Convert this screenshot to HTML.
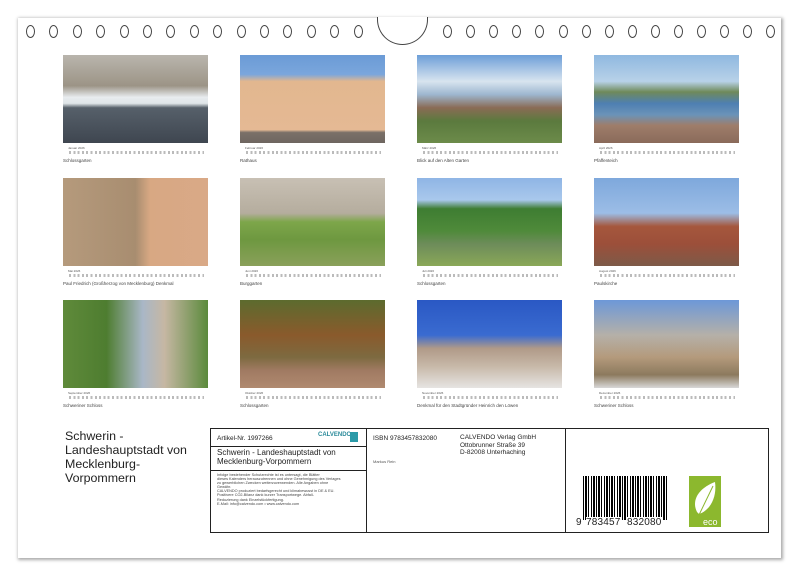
<!DOCTYPE html>
<html><head><meta charset="utf-8"><style>
*{margin:0;padding:0;box-sizing:border-box}
body{width:800px;height:577px;background:#fff;position:relative;overflow:hidden;font-family:"Liberation Sans",sans-serif;color:#222}
.card{position:absolute;left:18px;top:18px;width:763px;height:540px;background:#fff;box-shadow:1px 1px 3px 1px #aaa}
.ring{position:absolute;top:25px;width:9px;height:13px;border:1px solid #444;border-radius:50%}
.half{position:absolute;left:377px;top:17px;width:51px;height:28px;border:1px solid #444;border-top:none;border-radius:0 0 26px 26px;background:#fff}
.ph{position:absolute;width:145px;height:88px}
.m{position:absolute;font-size:3px;color:#555}
.d{position:absolute;height:3px;width:135px;background:repeating-linear-gradient(90deg,#bbb 0 2px,transparent 2px 4.3px)}
.c{position:absolute;font-size:4.5px;color:#444;white-space:nowrap}
.box{position:absolute;border:1px solid #222}
.t{position:absolute;white-space:nowrap}
</style></head><body>
<div class="card"></div>
<div id="rings"></div>
<div class="half"></div>

<div class="ph" style="left:63px;top:55px;background:linear-gradient(180deg,#b9b5ad 0%,#9c9486 35%,#e8ecef 48%,#dfe5e8 55%,#56606a 60%,#3f4650 100%)"></div>
<div class="ph" style="left:240px;top:55px;background:linear-gradient(180deg,#6b9bd6 0%,#7aa6dc 22%,#e2b78f 30%,#e5b994 85%,#7a7068 88%,#6e6660 100%)"></div>
<div class="ph" style="left:417px;top:55px;background:linear-gradient(180deg,#6d9fd8 0%,#d8e4ef 30%,#9db6cf 45%,#8a6b55 60%,#5b7a3e 75%,#6c8b4a 100%)"></div>
<div class="ph" style="left:594px;top:55px;background:linear-gradient(180deg,#8fb8e0 0%,#b8d2e8 30%,#6f8a5a 42%,#4e7fb2 55%,#6b93b8 68%,#9e7d6a 80%,#8a6a5a 100%)"></div>
<div class="ph" style="left:63px;top:178px;background:linear-gradient(90deg,#b59a7c 0%,#a88d70 50%,#d8a883 60%,#d9a987 100%)"></div>
<div class="ph" style="left:240px;top:178px;background:linear-gradient(180deg,#c8c0b4 0%,#b5ad9e 40%,#7da64a 50%,#6e9840 70%,#8aa05a 100%)"></div>
<div class="ph" style="left:417px;top:178px;background:linear-gradient(180deg,#8fb5e5 0%,#a9c8ec 25%,#3e7d32 35%,#4f8a3a 60%,#6d8c5a 75%,#8aa858 100%)"></div>
<div class="ph" style="left:594px;top:178px;background:linear-gradient(180deg,#7ea8dc 0%,#9cbde6 40%,#a5573d 55%,#9c4f3a 75%,#7d5a48 100%)"></div>
<div class="ph" style="left:63px;top:300px;background:linear-gradient(90deg,#5f8a3a 0%,#4e7d30 30%,#a9b7c7 55%,#c6b7a3 70%,#5b8a3c 100%)"></div>
<div class="ph" style="left:240px;top:300px;background:linear-gradient(180deg,#5c6b2e 0%,#8a5a2c 40%,#7d6a40 65%,#a07a62 80%,#b08a70 100%)"></div>
<div class="ph" style="left:417px;top:300px;background:linear-gradient(180deg,#2a58c4 0%,#3a6bd0 40%,#b09a88 55%,#c7b8a8 75%,#e6e4e2 100%)"></div>
<div class="ph" style="left:594px;top:300px;background:linear-gradient(180deg,#6d98d8 0%,#b5b0a8 40%,#b49a7c 65%,#8c7a5e 85%,#d8d8d8 100%)"></div>

<div id="cals"></div>

<div class="t" style="left:65px;top:429px;font-size:12.4px;line-height:14px;color:#222">Schwerin -<br>Landeshauptstadt von<br>Mecklenburg-<br>Vorpommern</div>

<div class="box" style="left:210px;top:428px;width:559px;height:105px"></div>
<div style="position:absolute;left:366px;top:428px;width:1px;height:105px;background:#222"></div>
<div style="position:absolute;left:565px;top:428px;width:1px;height:105px;background:#222"></div>
<div style="position:absolute;left:210px;top:446px;width:156px;height:1px;background:#222"></div>
<div style="position:absolute;left:210px;top:470px;width:156px;height:1px;background:#222"></div>
<div class="t" style="left:217px;top:435px;font-size:6.5px">Artikel-Nr. 1997266</div>
<div class="t" style="left:318px;top:432px;font-size:6px;color:#2a8a9a;font-weight:bold">CALVENDO</div>
<div style="position:absolute;left:350px;top:432px;width:8px;height:10px;background:#2b9aa8"></div>
<div class="t" style="left:217px;top:449px;font-size:8px;line-height:8.5px">Schwerin - Landeshauptstadt von<br>Mecklenburg-Vorpommern</div>
<div class="t" style="left:217px;top:473px;font-size:3.8px;line-height:4.1px;color:#444">Infolge bestehender Schutzrechte ist es untersagt, die Blätter<br>dieses Kalenders herauszutrennen und ohne Genehmigung des Verlages<br>zu gewerblichen Zwecken weiterzuverwenden. Alle Angaben ohne<br>Gewähr.<br>CALVENDO produziert bedarfsgerecht und klimabewusst in DE &amp; EU.<br>Positivere CO2-Bilanz dank kurzer Transportwege. Abfall-<br>Reduzierung dank Einzelstückfertigung.<br>E-Mail: info@calvendo.com • www.calvendo.com</div>
<div class="t" style="left:373px;top:435px;font-size:6.5px">ISBN 9783457832080</div>
<div class="t" style="left:373px;top:459px;font-size:4px;color:#555">Markus Rein</div>
<div class="t" style="left:460px;top:434px;font-size:6.5px;line-height:7.5px">CALVENDO Verlag GmbH<br>Ottobrunner Straße 39<br>D-82008 Unterhaching</div>

<div style="position:absolute;left:583px;top:476px;width:84px;height:44px;background:repeating-linear-gradient(90deg,#000 0 1px,#fff 1px 2px,#000 2px 4px,#fff 4px 5px,#000 5px 6px,#fff 6px 8px,#000 8px 9px,#fff 9px 10px,#000 10px 12px,#fff 12px 13px)"></div>
<div class="t" style="left:575px;top:517px;font-size:10px;background:#fff;padding:0 1px">9</div>
<div class="t" style="left:586px;top:517px;font-size:10px;background:#fff;letter-spacing:.2px">783457</div>
<div class="t" style="left:627px;top:517px;font-size:10px;background:#fff;letter-spacing:.2px">832080</div>
<div style="position:absolute;left:689px;top:476px;width:32px;height:51px;background:#8cb82e"></div>
<svg style="position:absolute;left:689px;top:476px" width="32" height="51"><path d="M8 36 C2 24 10 12 26 6 C28 20 22 34 10 38 Z" fill="#fff"/><path d="M9 41 L24 10" stroke="#8cb82e" stroke-width="1"/><text x="14" y="49" font-size="9" fill="#fff" font-family="Liberation Sans">eco</text></svg>

<script>
var r=document.getElementById('rings'),h='';
for(var i=0;i<15;i++)h+='<div class="ring" style="left:'+(26+i*23.4)+'px"></div>';
for(var i=0;i<15;i++)h+='<div class="ring" style="left:'+(443+i*23.1)+'px"></div>';
r.innerHTML=h;
var months=['Januar','Februar','März','April','Mai','Juni','Juli','August','September','Oktober','November','Dezember'];
var caps=['Schlossgarten','Rathaus','Blick auf den Alten Garten','Pfaffenteich','Paul Friedrich (Großherzog von Mecklenburg) Denkmal','Burggarten','Schlossgarten','Paulskirche','Schweriner Schloss','Schlossgarten','Denkmal für den Stadtgründer Heinrich den Löwen','Schweriner Schloss'];
var xs=[63,240,417,594],ys=[55,178,300],c='';
for(var k=0;k<12;k++){var x=xs[k%4],y=ys[Math.floor(k/4)]+88;
c+='<div class="m" style="left:'+(x+5)+'px;top:'+(y+3)+'px">'+months[k]+' 2026</div>';
c+='<div class="d" style="left:'+(x+6)+'px;top:'+(y+8)+'px"></div>';
c+='<div class="c" style="left:'+x+'px;top:'+(y+15)+'px">'+caps[k]+'</div>';}
document.getElementById('cals').innerHTML=c;
</script>
</body></html>
